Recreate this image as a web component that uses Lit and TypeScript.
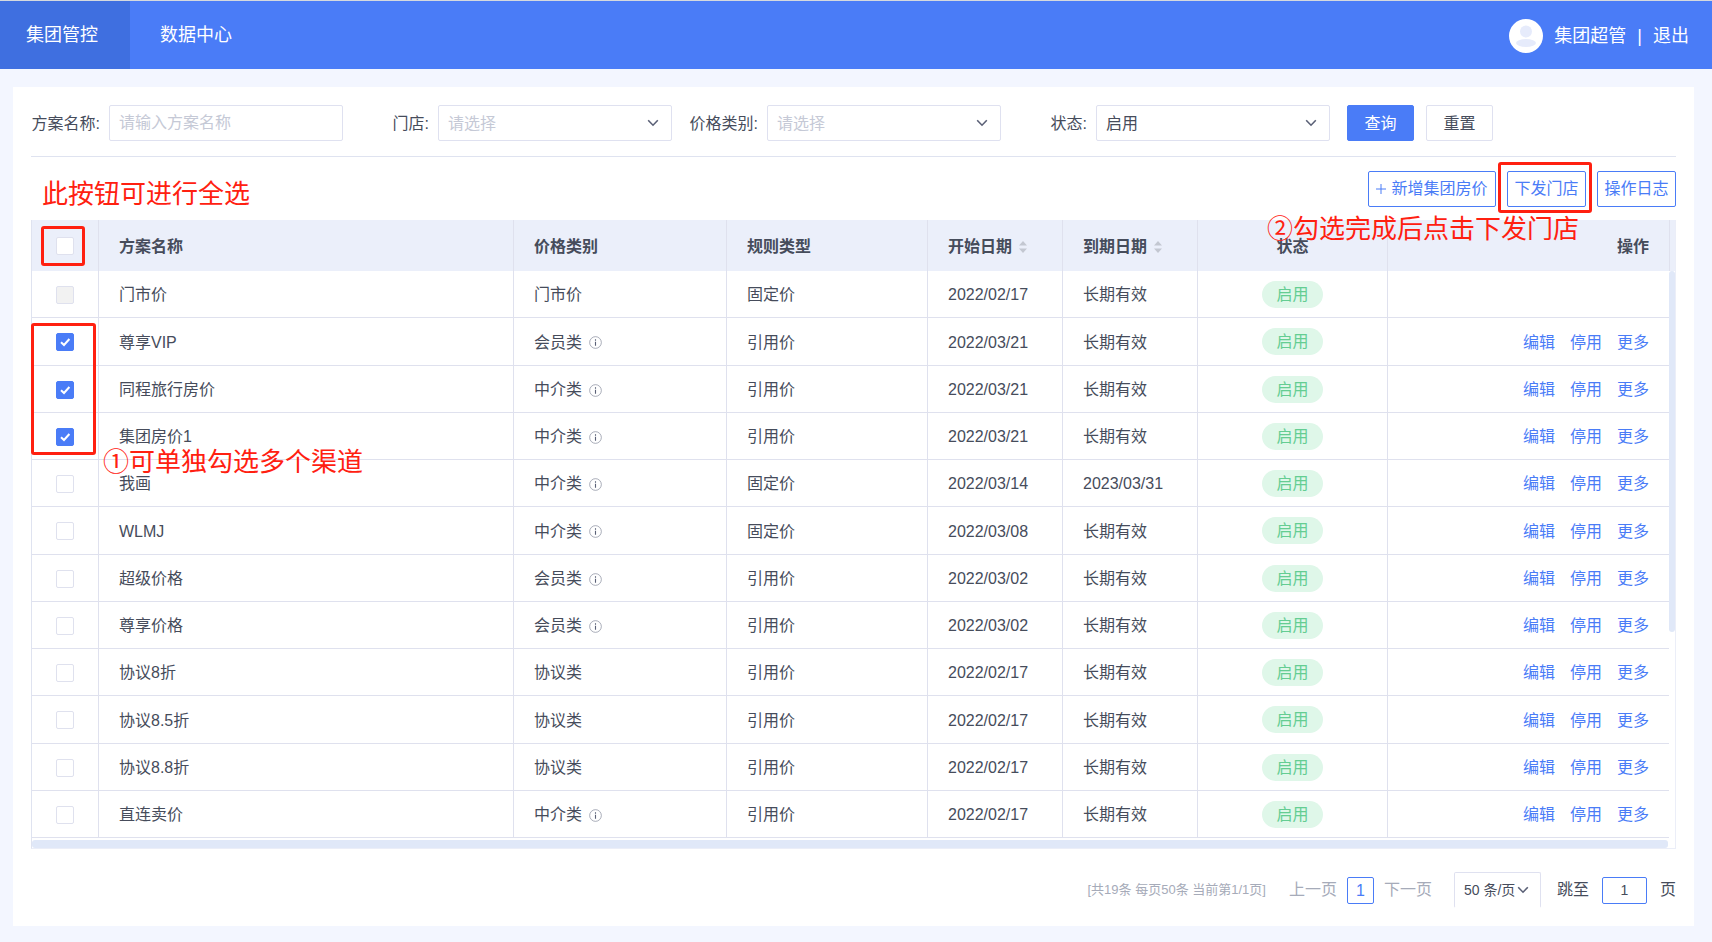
import { LitElement, html, css, svg, nothing } from "lit";
import { customElement, state } from "lit/decorators.js";

interface Plan {
  name: string;
  category: string;
  info: boolean;
  rule: string;
  start: string;
  end: string;
  locked?: boolean;
  checked?: boolean;
}

const FOREVER = "长期有效";

const PLANS: Plan[] = [
  { name: "门市价", category: "门市价", info: false, rule: "固定价", start: "2022/02/17", end: FOREVER, locked: true },
  { name: "尊享VIP", category: "会员类", info: true, rule: "引用价", start: "2022/03/21", end: FOREVER, checked: true },
  { name: "同程旅行房价", category: "中介类", info: true, rule: "引用价", start: "2022/03/21", end: FOREVER, checked: true },
  { name: "集团房价1", category: "中介类", info: true, rule: "引用价", start: "2022/03/21", end: FOREVER, checked: true },
  { name: "我画", category: "中介类", info: true, rule: "固定价", start: "2022/03/14", end: "2023/03/31" },
  { name: "WLMJ", category: "中介类", info: true, rule: "固定价", start: "2022/03/08", end: FOREVER },
  { name: "超级价格", category: "会员类", info: true, rule: "引用价", start: "2022/03/02", end: FOREVER },
  { name: "尊享价格", category: "会员类", info: true, rule: "引用价", start: "2022/03/02", end: FOREVER },
  { name: "协议8折", category: "协议类", info: false, rule: "引用价", start: "2022/02/17", end: FOREVER },
  { name: "协议8.5折", category: "协议类", info: false, rule: "引用价", start: "2022/02/17", end: FOREVER },
  { name: "协议8.8折", category: "协议类", info: false, rule: "引用价", start: "2022/02/17", end: FOREVER },
  { name: "直连卖价", category: "中介类", info: true, rule: "引用价", start: "2022/02/17", end: FOREVER },
];

const chevron = html`<svg class="chevron" viewBox="0 0 12 8" aria-hidden="true">
  ${svg`<path d="M1.2 1.2 6 6.2l4.8-5" fill="none" stroke="currentColor" stroke-width="1.6" />`}
</svg>`;

const plus = html`<svg class="plus" viewBox="0 0 10 10" aria-hidden="true">
  ${svg`<path d="M0 5h10M5 0v10" fill="none" stroke="currentColor" />`}
</svg>`;

const sorter = html`<svg class="sorter" viewBox="0 0 8 12" aria-hidden="true">
  ${svg`<path d="M4 0 8 4.500H0zM4 12 0 7.500h8z" fill="currentColor" />`}
</svg>`;

const infoIcon = html`<svg class="info" viewBox="0 0 14 14" aria-hidden="true">
  ${svg`<circle cx="7" cy="7" r="6.300" fill="none" stroke="#8b90a0" stroke-width=".8" />
  <path d="M7 3.600v1.500M7 6.200v4.200" fill="none" stroke="currentColor" stroke-width="1.200" />`}
</svg>`;

const avatar = html`<svg class="avatar" viewBox="0 0 34 34" aria-hidden="true">
  ${svg`<circle cx="17" cy="17" r="17" fill="#fff" />
  <circle cx="17" cy="12.500" r="6" fill="#e6ebfb" />
  <ellipse cx="17" cy="24" rx="10" ry="4" fill="#e6ebfb" />`}
</svg>`;

@customElement("app-root")
export class AppRoot extends LitElement {
  @state() private plans = PLANS;

  static styles = css`
    :host {
      display: block;
      min-height: 100vh;
      box-sizing: border-box;
      background: #f3f6ff;
      color: #464c5b;
      font: 16px/24px "Liberation Sans", "Noto Sans CJK SC", sans-serif;
    }
    * { box-sizing: border-box; }
    button, input, select { font: inherit; color: inherit; margin: 0; }
    a { color: #4a7cf7; text-decoration: none; }
    svg { display: block; flex: none; }

    .topbar {
      display: flex;
      align-items: stretch;
      height: 69px;
      border-top: 1px solid #d5d9de;
      background: #4a7cf7;
      font-size: 18px;
    }
    .topbar a { color: #fff; }
    .nav { display: flex; }
    .nav a { display: flex; align-items: center; padding: 0 30px; }
    .nav .current { padding: 0 32px 0 26px; background: #3f6fe0; }
    .account {
      display: flex;
      align-items: center;
      gap: 11px;
      margin-left: auto;
      padding: 1px 23px 0 0;
      color: #fff;
    }
    .avatar { width: 34px; height: 34px; }

    .panel { margin: 18px 18px 0 13px; padding: 18px; background: #fff; }

    .filters {
      display: flex;
      gap: 17px;
      padding-bottom: 15px;
      border-bottom: 1px solid #dfe3f0;
    }
    .field { display: flex; align-items: center; width: 312px; }
    .field label { flex: 1; padding: 2px 9px 0 0; text-align: right; white-space: nowrap; }
    .control { position: relative; width: 234px; }
    .control input, .control select, .size select {
      display: block;
      width: 100%;
      height: 36px;
      padding: 0 9px;
      border: 1px solid #dfe1f0;
      border-radius: 2px;
      background: #fff;
      appearance: none;
      outline: none;
    }
    .control select { padding-top: 2px; }
    .control input::placeholder { color: #c5c9d6; opacity: 1; }
    .control .empty { color: #c5c9d6; }
    .chevron { width: 12px; height: 8px; color: #5a6076; pointer-events: none; }
    .control .chevron { position: absolute; right: 13px; top: 14px; }

    .btn {
      height: 36px;
      padding: 0;
      border: 1px solid #dfe1f0;
      border-radius: 2px;
      background: #fff;
    }
    .actions { display: flex; gap: 12px; }
    .actions .btn { width: 67px; padding-top: 1px; }
    .btn.primary { border-color: #4a7cf7; background: #4a7cf7; color: #fff; }

    .toolbar { display: flex; justify-content: flex-end; gap: 11px; padding: 14px 0 13px; }
    .toolbar .btn { width: 79px; border-color: #4a7cf7; color: #4a7cf7; }
    .toolbar .btn.add { display: flex; align-items: center; justify-content: center; gap: 5px; width: 128px; }
    .plus { width: 10px; height: 10px; }
    .target { position: relative; display: flex; }

    .grid { border-left: 1px solid #dfe3f0; border-bottom: 1px solid #ebeef8; }
    .viewport { display: flex; }
    table { flex: 1; min-width: 0; border-spacing: 0; table-layout: fixed; }
    th, td { padding: 2px 20px 0; border-right: 1px solid #dfe1ee; text-align: left; font-weight: 400; white-space: nowrap; }
    td { height: 47px; border-bottom: 1px solid #dfe1ee; }
    tr:nth-child(4n + 2) td { height: 48px; }
    th { height: 51px; background: #ebeffa; font-weight: 700; }
    th:last-child, td:last-child { border-right: 0; text-align: right; }
    .pick { width: 67px; padding: 0; text-align: center; }
    .category { width: 213px; }
    .rule { width: 201px; }
    .date { width: 135px; }
    .status { width: 190px; text-align: center; }
    td.status { padding-top: 0; }
    .ops { width: 281px; }
    .inline { display: flex; align-items: center; gap: 7px; }
    .sorter { width: 8px; height: 12px; color: #c3c7d1; }
    .info { width: 13px; height: 13px; color: #5a6076; }
    .links { display: flex; justify-content: flex-end; gap: 15px; }
    .pill {
      display: inline-block;
      width: 61px;
      height: 27px;
      border-radius: 14px;
      background: #dff7e9;
      color: #64cd92;
      line-height: 27px;
      text-align: center;
      vertical-align: middle;
    }

    .box { position: relative; display: inline-flex; vertical-align: middle; }
    .box input {
      width: 18px;
      height: 18px;
      border: 1px solid #dfe1ee;
      border-radius: 2px;
      background: #fff;
      appearance: none;
    }
    .box input:disabled { background: #f2f2f2; }
    .box input:checked { border-color: #4a7cf7; background: #4a7cf7; }
    .tick { position: absolute; inset: 0; width: 18px; height: 18px; pointer-events: none; }

    .gutter { width: 7px; border-right: 1px solid #ebeef8; }
    .gutter-head { height: 51px; border-left: 1px solid #dfe1ee; background: #ebeffa; }
    .thumb-y { width: 6px; height: 361px; border-radius: 3px; background: #e0e8f8; }
    .bottom { height: 10px; padding: 2px 7px 0 0; border-right: 1px solid #ebeef8; }
    .thumb-x { height: 8px; border-radius: 3px; background: #e0e8f8; }

    .pager { display: flex; align-items: center; justify-content: flex-end; padding-top: 23px; }
    .muted { color: #a6abb9; }
    .summary { margin-right: 23px; font-size: 13px; }
    .page {
      width: 27px;
      height: 27px;
      margin: 0 10px;
      padding: 0;
      border: 1px solid #4a7cf7;
      border-radius: 2px;
      background: #fff;
      color: #4a7cf7;
      line-height: 25px;
    }
    .step { padding: 0; border: 0; background: none; }
    .size { position: relative; width: 87px; margin: 0 16px 0 22px; font-size: 14px; }
    .size select { border-bottom-color: #fff; }
    .size .chevron { position: absolute; right: 12px; top: 14px; }
    .jump { display: flex; align-items: center; gap: 13px; }
    .jump input {
      width: 45px;
      height: 27px;
      padding: 0;
      border: 1px solid #4a7cf7;
      border-radius: 2px;
      font-size: 14px;
      text-align: center;
      outline: none;
    }

    .mark { position: absolute; border: 3px solid #ff2010; border-radius: 3px; pointer-events: none; }
    .note { position: absolute; color: #ff2010; font-size: 26px; line-height: 32px; font-weight: 400; white-space: nowrap; pointer-events: none; }
    .anchor { position: relative; }
    .mark-send { inset: -9px -6px -6px -9px; }
    .mark-all { left: 9px; top: 6px; width: 44px; height: 40px; }
    .mark-rows { left: -1px; top: 103px; width: 65px; height: 132px; }
    .note-all { left: 10px; top: -42px; }
    .note-rows { left: 71px; top: 226px; }
    .note-send { right: 97px; top: -7px; }
  `;

  private toggle(index: number) {
    this.plans = this.plans.map((p, i) => (i === index ? { ...p, checked: !p.checked } : p));
  }

  private toggleAll(e: Event) {
    const checked = (e.target as HTMLInputElement).checked;
    this.plans = this.plans.map((p) => (p.locked ? p : { ...p, checked }));
  }

  private select(id: string, label: string, value: string, empty: boolean) {
    return html`<div class="field">
      <label for=${id}>${label}:</label>
      <div class="control">
        <select id=${id} class=${empty ? "empty" : ""}><option>${value}</option></select>
        ${chevron}
      </div>
    </div>`;
  }

  private row(p: Plan, i: number) {
    return html`<tr>
      <td class="pick">
        <span class="box">
          <input type="checkbox" aria-label=${p.name} .checked=${!!p.checked} ?disabled=${!!p.locked} @change=${() => this.toggle(i)} />
          ${p.checked
            ? html`<svg class="tick" viewBox="0 0 18 18" aria-hidden="true">
                ${svg`<path d="M5 9.200 8 12l5.400-6" fill="none" stroke="#fff" stroke-width="2" />`}
              </svg>`
            : nothing}
        </span>
      </td>
      <td>${p.name}</td>
      <td><span class="inline">${p.category}${p.info ? infoIcon : nothing}</span></td>
      <td>${p.rule}</td>
      <td>${p.start}</td>
      <td>${p.end}</td>
      <td class="status"><span class="pill">启用</span></td>
      <td>
        ${p.locked
          ? nothing
          : html`<span class="links"><a href="#edit">编辑</a><a href="#stop">停用</a><a href="#more">更多</a></span>`}
      </td>
    </tr>`;
  }

  render() {
    return html`
      <header class="topbar">
        <nav class="nav">
          <a class="current" href="#group">集团管控</a>
          <a href="#data">数据中心</a>
        </nav>
        <div class="account">
          ${avatar}<span>集团超管</span><span>|</span><a href="#logout">退出</a>
        </div>
      </header>

      <main class="panel">
        <form class="filters" @submit=${(e: Event) => e.preventDefault()}>
          <div class="field">
            <label for="plan">方案名称:</label>
            <div class="control"><input id="plan" type="text" placeholder="请输入方案名称" /></div>
          </div>
          ${this.select("store", "门店", "请选择", true)}
          ${this.select("category", "价格类别", "请选择", true)}
          ${this.select("status", "状态", "启用", false)}
          <div class="actions">
            <button class="btn primary" type="submit">查询</button>
            <button class="btn" type="reset">重置</button>
          </div>
        </form>

        <div class="toolbar">
          <button class="btn add" type="button">${plus}<span>新增集团房价</span></button>
          <div class="target">
            <button class="btn" type="button">下发门店</button>
            <span class="mark mark-send"></span>
          </div>
          <button class="btn" type="button">操作日志</button>
        </div>

        <div class="grid anchor">
          <div class="viewport">
            <table>
              <thead>
                <tr>
                  <th class="pick">
                    <span class="box"><input type="checkbox" aria-label="全选" @change=${this.toggleAll} /></span>
                  </th>
                  <th>方案名称</th>
                  <th class="category">价格类别</th>
                  <th class="rule">规则类型</th>
                  <th class="date"><span class="inline">开始日期${sorter}</span></th>
                  <th class="date"><span class="inline">到期日期${sorter}</span></th>
                  <th class="status">状态</th>
                  <th class="ops">操作</th>
                </tr>
              </thead>
              <tbody>
                ${this.plans.map((p, i) => this.row(p, i))}
              </tbody>
            </table>
            <div class="gutter">
              <div class="gutter-head"></div>
              <div class="thumb-y"></div>
            </div>
          </div>
          <div class="bottom"><div class="thumb-x"></div></div>
          <span class="mark mark-all"></span>
          <span class="mark mark-rows"></span>
          <span class="note note-all">此按钮可进行全选</span>
          <span class="note note-rows">①可单独勾选多个渠道</span>
          <span class="note note-send">②勾选完成后点击下发门店</span>
        </div>

        <footer class="pager">
          <span class="summary muted">[共19条 每页50条 当前第1/1页]</span>
          <button class="step muted" type="button">上一页</button>
          <button class="page" type="button">1</button>
          <button class="step muted" type="button">下一页</button>
          <div class="size">
            <select aria-label="每页条数"><option>50 条/页</option></select>
            ${chevron}
          </div>
          <div class="jump">
            <label for="jump">跳至</label>
            <input id="jump" type="text" value="1" />
            <span>页</span>
          </div>
        </footer>
      </main>
    `;
  }
}
